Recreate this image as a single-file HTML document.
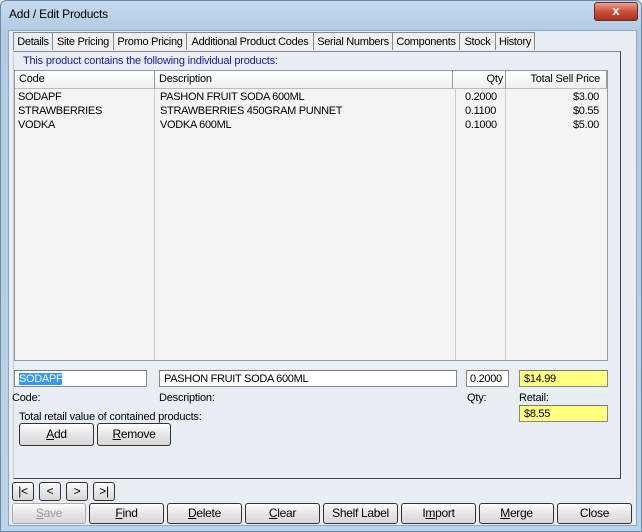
<html><head><style>
body{margin:0;width:642px;height:532px;overflow:hidden;font-family:"Liberation Sans",sans-serif;font-size:11px;}
.win{position:absolute;left:0;top:0;width:640px;height:530px;border:1px solid #6b8aa8;border-radius:6px 6px 0 0;background:linear-gradient(#c6dbef,#b2cbe3 30px,#bcd3e9);}
.client{position:absolute;left:7px;top:29px;width:627px;height:494px;background:#e9eef4;border:1px solid #8ea6bf;}
.a{position:absolute;white-space:nowrap;letter-spacing:-0.2px;}
.tab{position:absolute;top:31px;height:18px;border:1px solid #8a8a8a;border-bottom:none;border-left:none;line-height:18px;font-size:11px;letter-spacing:-0.3px;text-align:center;overflow:hidden;white-space:nowrap;box-sizing:border-box;background:#f0f0f0;}
.panel{position:absolute;left:12px;top:50px;width:606px;height:426px;border:1px solid #444;border-top:1px solid #888;border-left:1px solid #ccc;}
.list{position:absolute;left:13px;top:69px;width:592px;height:289px;background:#f4f4f4;border:1px solid #999;}
.hd{position:absolute;top:0;height:17px;border-right:1px solid #999;border-bottom:1px solid #bbb;background:linear-gradient(#fff,#eef0f2);line-height:17px;font-size:11px;letter-spacing:-0.2px;}
.cell{position:absolute;font-size:11px;letter-spacing:-0.3px;}
.inp{position:absolute;height:17px;border:1px solid #888;border-top-color:#777;background:#fff;line-height:17px;font-size:11px;letter-spacing:-0.3px;padding-left:4px;box-sizing:border-box;}
.btn{position:absolute;height:22px;border:1px solid #333;border-radius:3px;background:linear-gradient(#fdfdfd,#e6e6e6 50%,#d8d8dc);text-align:center;line-height:20px;font-size:12px;letter-spacing:-0.3px;box-sizing:border-box;}
u{text-decoration:underline;}
</style></head><body>
<div class="win">
<div class="a" style="left:8px;top:6px;font-size:12px;">Add / Edit Products</div>
<div style="position:absolute;left:593px;top:1px;width:42px;height:17px;border:1px solid #6d2a20;border-radius:3px;background:linear-gradient(#e8a090,#c8503a 50%,#b03020);color:#fff;font-weight:bold;text-align:center;line-height:16px;font-size:13px;">x</div>
<div class="client"></div>
<div class="panel"></div>
<div class="tab" style="left:12px;width:40px;border-left:1px solid #8a8a8a;background:#e9eef4;">Details</div>
<div class="tab" style="left:52px;width:61px;">Site Pricing</div>
<div class="tab" style="left:113px;width:73px;">Promo Pricing</div>
<div class="tab" style="left:186px;width:127px;">Additional Product Codes</div>
<div class="tab" style="left:313px;width:79px;">Serial Numbers</div>
<div class="tab" style="left:392px;width:67px;">Components</div>
<div class="tab" style="left:459px;width:36px;">Stock</div>
<div class="tab" style="left:495px;width:39px;">History</div>
<div class="a" style="left:22px;top:54px;color:#1a1aa0;">This product contains the following individual products:</div>
<div class="list">
<div class="hd" style="left:0;width:135px;padding-left:4px;">Code</div>
<div class="hd" style="left:140px;width:293px;padding-left:4px;">Description</div>
<div class="hd" style="left:438px;width:50px;text-align:right;padding-right:2px;">Qty</div>
<div class="hd" style="left:491px;width:94px;text-align:right;padding-right:6px;">Total Sell Price</div>
<div style="position:absolute;left:440px;top:18px;width:1px;height:271px;background:#ccc"></div>
<div style="position:absolute;left:490px;top:18px;width:1px;height:271px;background:#ccc"></div>
<div style="position:absolute;left:139px;top:18px;width:1px;height:271px;background:#ccc"></div>
<div class="cell" style="left:3px;top:20px">SODAPF</div><div class="cell" style="left:145px;top:20px">PASHON FRUIT SODA 600ML</div><div class="cell" style="left:450px;top:20px">0.2000</div><div class="cell" style="right:8px;top:20px">$3.00</div>
<div class="cell" style="left:3px;top:34px">STRAWBERRIES</div><div class="cell" style="left:145px;top:34px">STRAWBERRIES 450GRAM PUNNET</div><div class="cell" style="left:450px;top:34px">0.1100</div><div class="cell" style="right:8px;top:34px">$0.55</div>
<div class="cell" style="left:3px;top:48px">VODKA</div><div class="cell" style="left:145px;top:48px">VODKA 600ML</div><div class="cell" style="left:450px;top:48px">0.1000</div><div class="cell" style="right:8px;top:48px">$5.00</div>
</div>
<div class="inp" style="left:13px;top:369px;width:133px;"><span style="background:#3399ff;color:#fff">SODAPF</span></div>
<div class="inp" style="left:158px;top:369px;width:298px;">PASHON FRUIT SODA 600ML</div>
<div class="inp" style="left:465px;top:369px;width:43px;padding-left:3px;">0.2000</div>
<div class="inp" style="left:518px;top:369px;width:89px;background:#ffff80;">$14.99</div>
<div class="a" style="left:11px;top:391px;">Code:</div>
<div class="a" style="left:158px;top:391px;">Description:</div>
<div class="a" style="left:466px;top:391px;">Qty:</div>
<div class="a" style="left:518px;top:391px;">Retail:</div>
<div class="a" style="left:18px;top:410px;">Total retail value of contained products:</div>
<div class="inp" style="left:518px;top:404px;width:89px;background:#ffff80;">$8.55</div>
<div class="btn" style="left:18px;top:422px;width:75px;height:23px;"><u>A</u>dd</div>
<div class="btn" style="left:96px;top:422px;width:74px;height:23px;"><u>R</u>emove</div>
<div class="btn" style="left:11px;top:481px;width:22px;height:19px;line-height:17px;">|&lt;</div>
<div class="btn" style="left:38px;top:481px;width:22px;height:19px;line-height:17px;">&lt;</div>
<div class="btn" style="left:65px;top:481px;width:22px;height:19px;line-height:17px;">&gt;</div>
<div class="btn" style="left:92px;top:481px;width:22px;height:19px;line-height:17px;">&gt;|</div>
<div class="btn" style="left:11px;top:502px;width:74px;height:21px;line-height:19px;color:#999;border-color:#aaa;"><u>S</u>ave</div>
<div class="btn" style="left:88px;top:502px;width:75px;height:21px;line-height:19px;"><u>F</u>ind</div>
<div class="btn" style="left:166px;top:502px;width:75px;height:21px;line-height:19px;"><u>D</u>elete</div>
<div class="btn" style="left:244px;top:502px;width:75px;height:21px;line-height:19px;"><u>C</u>lear</div>
<div class="btn" style="left:322px;top:502px;width:75px;height:21px;line-height:19px;">Shelf Label</div>
<div class="btn" style="left:400px;top:502px;width:75px;height:21px;line-height:19px;">I<u>m</u>port</div>
<div class="btn" style="left:478px;top:502px;width:75px;height:21px;line-height:19px;"><u>M</u>erge</div>
<div class="btn" style="left:556px;top:502px;width:75px;height:21px;line-height:19px;">Close</div>
</div>
</body></html>
